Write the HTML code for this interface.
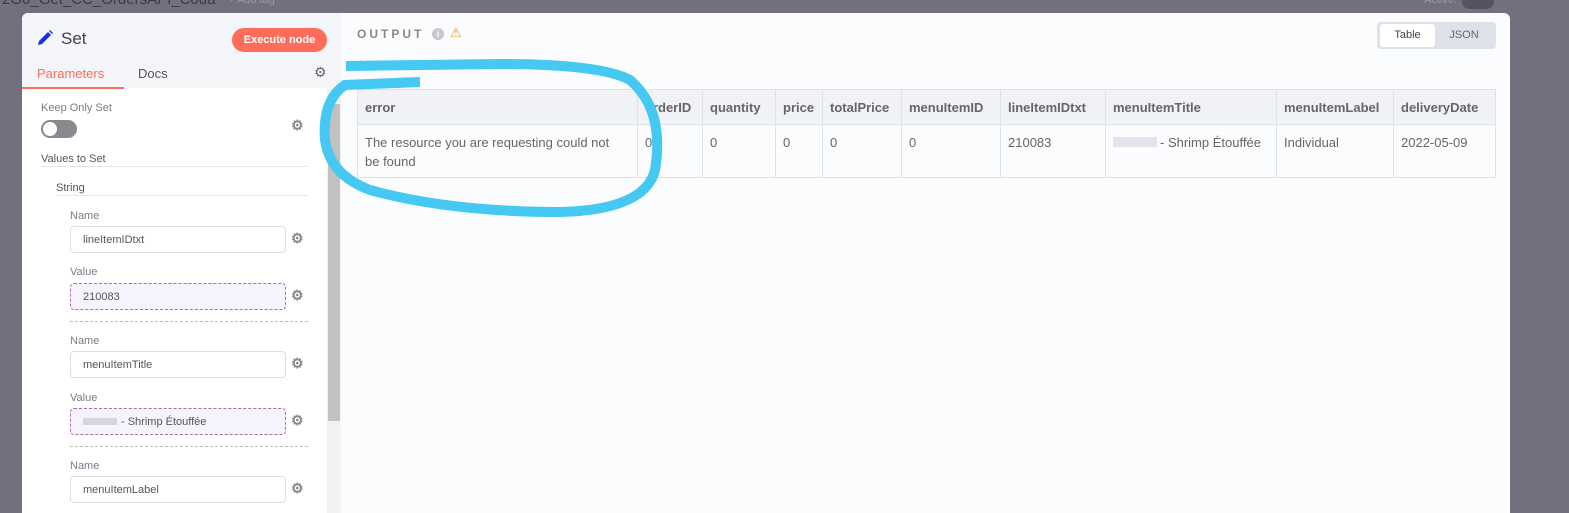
<!DOCTYPE html>
<html><head><meta charset="utf-8"><style>
*{box-sizing:border-box;margin:0;padding:0}
body{width:1569px;height:505px;overflow:hidden;background:#72707f;font-family:"Liberation Sans",sans-serif;position:relative}
.modal{position:absolute;left:22px;top:13px;width:1488px;height:500px;background:#fbfcfe;border-radius:6px 6px 0 0;overflow:hidden}
.left{position:absolute;left:0;top:0;width:319px;height:500px;background:#fff;border-right:1px solid #e4e6ec}
.lhead{position:absolute;left:0;top:0;width:319px;height:75px;background:#f4f5f8}
.abs{position:absolute}
.lbl{font-size:11px;color:#7b7b85}
.inp{position:absolute;left:48px;width:216px;height:27px;border:1px solid #dcdfe6;border-radius:4px;background:#fff;font-size:11px;color:#555;padding:7px 0 0 12px}
.inp.v{background:#f6f3fd;border:1px dashed #b06aa4}
.gear{position:absolute;left:269px;font-size:14px;color:#888;font-weight:bold}
.dash{position:absolute;left:48px;width:238px;border-top:1px dashed #bbb}
table{position:absolute;left:335px;top:76px;border-collapse:collapse;font-size:13px;color:#666}
td,th{border:1px solid #dfe1e8;text-align:left;vertical-align:top;padding:0 7px}
th{background:#f1f2f6;height:35px;vertical-align:middle;font-weight:bold;color:#666}
td{height:53px;padding-top:8px;line-height:19px}
</style></head><body>
<div class="abs" style="left:2px;top:-9px;font-size:15px;color:#3a3a4a">2G0_Get_CC_OrdersAPI_Coda</div>
<div class="abs" style="left:228px;top:-6px;font-size:11px;color:#9a98a5">+ Add tag</div>
<div class="abs" style="left:1424px;top:-6px;font-size:11px;color:#9a98a5">Active:</div>
<div class="abs" style="left:1462px;top:-6px;width:32px;height:15px;border-radius:8px;background:#55535f"></div>
<div class="modal">
 <div class="left">
  <div class="lhead"></div>
  <svg class="abs" style="left:14px;top:16px" width="18" height="18" viewBox="0 0 18 18"><path d="M2 16 L3 12 L12 3 L15 6 L6 15 Z M13 2 L14 1 L17 4 L16 5 Z" fill="#1a2ee0"/></svg>
  <div class="abs" style="left:39px;top:16px;font-size:17px;color:#444">Set</div>
  <div class="abs" style="left:210px;top:15px;width:95px;height:24px;border-radius:12px;background:#ff6d5a;color:#fff;font-size:11px;font-weight:bold;text-align:center;line-height:24px">Execute node</div>
  <div class="abs" style="left:15px;top:53px;font-size:13px;color:#ff6d5a">Parameters</div>
  <div class="abs" style="left:0;top:74px;width:102px;height:2px;background:#ff6d5a"></div>
  <div class="abs" style="left:116px;top:53px;font-size:13px;color:#555">Docs</div>
  <div class="abs" style="left:292px;top:51px;font-size:14px;color:#666">⚙</div>
  <div class="abs" style="left:305px;top:76px;width:14px;height:424px;background:#f1f1f1"></div>
  <div class="abs" style="left:306px;top:91px;width:12px;height:317px;background:#c1c1c1"></div>
  <div class="abs lbl" style="left:19px;top:89px">Keep Only Set</div>
  <div class="abs" style="left:19px;top:107px;width:36px;height:18px;border-radius:9px;background:#888a90"></div>
  <div class="abs" style="left:21px;top:109px;width:14px;height:14px;border-radius:7px;background:#fff"></div>
  <div class="gear" style="top:104px">⚙</div>
  <div class="abs lbl" style="left:19px;top:140px;color:#555">Values to Set</div>
  <div class="abs" style="left:19px;top:153px;width:267px;border-top:1px solid #e4e6ec"></div>
  <div class="abs lbl" style="left:34px;top:169px;color:#555">String</div>
  <div class="abs" style="left:34px;top:182px;width:252px;border-top:1px solid #e4e6ec"></div>
  <div class="abs lbl" style="left:48px;top:197px">Name</div>
  <div class="inp" style="top:213px">lineItemIDtxt</div><div class="gear" style="top:217px">⚙</div>
  <div class="abs lbl" style="left:48px;top:253px">Value</div>
  <div class="inp v" style="top:270px">210083</div><div class="gear" style="top:274px">⚙</div>
  <div class="dash" style="top:308px"></div>
  <div class="abs lbl" style="left:48px;top:322px">Name</div>
  <div class="inp" style="top:338px">menuItemTitle</div><div class="gear" style="top:342px">⚙</div>
  <div class="abs lbl" style="left:48px;top:379px">Value</div>
  <div class="inp v" style="top:395px"><span style="display:inline-block;width:34px;height:7px;background:#d8d6dc;margin-right:4px"></span>- Shrimp Étouffée</div><div class="gear" style="top:399px">⚙</div>
  <div class="dash" style="top:433px"></div>
  <div class="abs lbl" style="left:48px;top:447px">Name</div>
  <div class="inp" style="top:463px">menuItemLabel</div><div class="gear" style="top:467px">⚙</div>
 </div>
 <div class="abs" style="left:335px;top:14px;font-size:12px;letter-spacing:3px;color:#888;font-weight:bold">OUTPUT</div>
 <div class="abs" style="left:410px;top:15px;width:12px;height:12px;border-radius:6px;background:#c8c8cc;color:#fff;font-size:9px;text-align:center;line-height:12px;font-weight:bold">i</div>
 <div class="abs" style="left:428px;top:12px;font-size:13px;color:#e89a2c">⚠</div>
 <div class="abs" style="left:1355px;top:9px;width:119px;height:27px;border-radius:4px;background:#dfe1e8"></div>
 <div class="abs" style="left:1358px;top:11px;width:55px;height:23px;border-radius:3px;background:#fff;font-size:11px;color:#444;text-align:center;line-height:23px">Table</div>
 <div class="abs" style="left:1413px;top:11px;width:58px;font-size:11px;color:#666;text-align:center;line-height:23px">JSON</div>
 <div class="abs" style="left:335px;top:45px;font-size:12px;color:#4a9">1 item</div>
 <table>
  <tr><th style="width:280px">error</th><th style="width:65px">orderID</th><th style="width:73px">quantity</th><th style="width:47px">price</th><th style="width:79px">totalPrice</th><th style="width:99px">menuItemID</th><th style="width:105px">lineItemIDtxt</th><th style="width:171px">menuItemTitle</th><th style="width:117px">menuItemLabel</th><th style="width:102px">deliveryDate</th></tr>
  <tr><td>The resource you are requesting could not<br>be found</td><td>0</td><td>0</td><td>0</td><td>0</td><td>0</td><td>210083</td><td><span style="display:inline-block;width:44px;height:10px;background:#e4e2ea;margin-right:3px"></span>- Shrimp Étouffée</td><td>Individual</td><td>2022-05-09</td></tr>
 </table>
</div>
<svg class="abs" style="left:0;top:0" width="1569" height="505"><path d="M346 66 L500 64 Q600 64 630 80 Q665 110 655 170 Q645 210 560 212 Q450 212 370 190 Q330 175 325 140 Q322 100 345 85 L420 82" fill="none" stroke="#45c8f2" stroke-width="10" stroke-linecap="butt"/></svg>
</body></html>
